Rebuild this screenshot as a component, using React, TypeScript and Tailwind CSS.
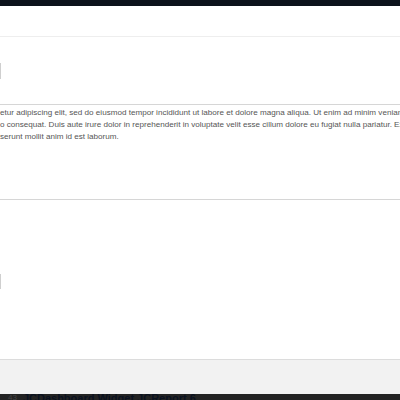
export default function App() {
  return (
    <div className="w-[400px] h-[400px] overflow-hidden bg-white flex flex-col" style={{ fontFamily: '"Liberation Sans", Arial, sans-serif' }}>
      {/* window chrome */}
      <div className="h-[6px] bg-[#0c121b] shrink-0" />
      <div className="h-[31px] border-b border-[#eeeeee] shrink-0" />

      {/* first field row */}
      <div className="h-[67px] flex items-center shrink-0">
        <div className="w-[1px] h-[16px] bg-[#cfcfcf]" />
      </div>

      {/* description */}
      <div className="h-[95px] border-t border-[#d6d6d6] pt-[2px] text-[8.1px] leading-[11.8px] text-[#555555] whitespace-nowrap overflow-hidden shrink-0">
        <p>etur adipiscing elit, sed do eiusmod tempor incididunt ut labore et dolore magna aliqua. Ut enim ad minim veniam, quis nostrud</p>
        <p>o consequat. Duis aute irure dolor in reprehenderit in voluptate velit esse cillum dolore eu fugiat nulla pariatur. Excepteur sint</p>
        <p>serunt mollit anim id est laborum.</p>
      </div>

      {/* second field row */}
      <div className="h-[160px] border-t border-[#d6d6d6] flex flex-col shrink-0">
        <div className="h-[74px]" />
        <div className="w-[1px] h-[15px] bg-[#cfcfcf]" />
      </div>

      {/* footer */}
      <div className="h-[35px] border-t border-[#dcdcdc] bg-[#f2f2f2] shrink-0" />
      <div className="flex-1 bg-[#232323] relative overflow-hidden">
        <div className="absolute left-[8px] top-[-4px] flex items-center gap-[6px] text-[11px] font-bold whitespace-nowrap">
          <span className="text-[#444444] text-[8px] font-normal">43</span>
          <span className="text-[#0b1220]">JCDashboard Widget JCReport 6</span>
        </div>
      </div>
    </div>
  );
}
